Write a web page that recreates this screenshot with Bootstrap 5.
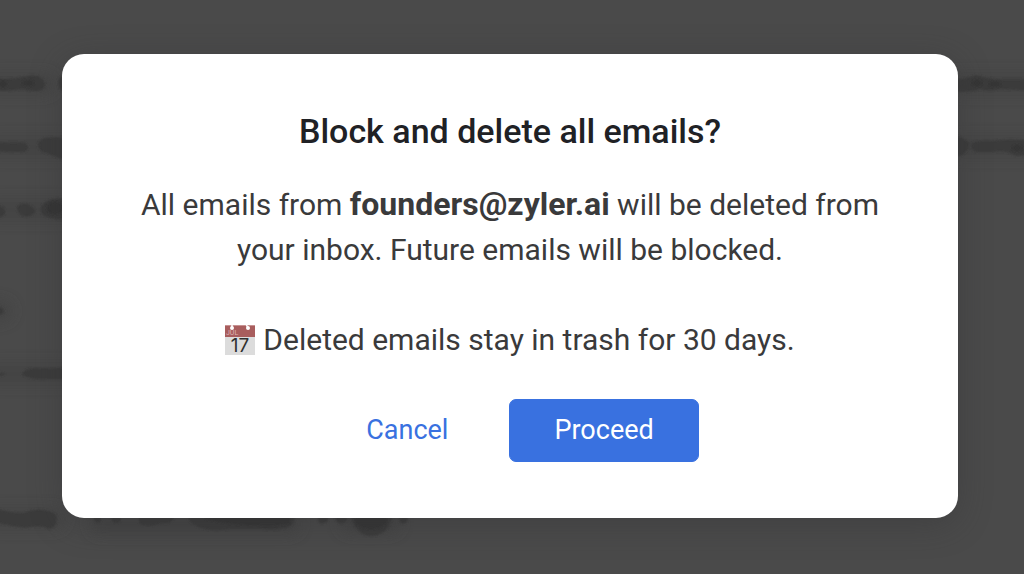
<!DOCTYPE html>
<html lang="en">
<head>
<meta charset="utf-8">
<meta name="viewport" content="width=device-width, initial-scale=1">
<title>Block and delete all emails?</title>
<link href="https://cdn.jsdelivr.net/npm/bootstrap@5.3.0/dist/css/bootstrap.min.css" rel="stylesheet">
<style>
  body { background: #4a4a4a; font-family: Roboto, "Liberation Sans", sans-serif; color: #3a3a3b; padding: 0 4px 2px 0; }
  .inbox-blur { inset: 0; z-index: 0; }
  .confirm { width: 88%; max-width: 896px; padding: 53px 56px 56px; border-radius: 22px; background: #fff; box-shadow: 0 6px 32px rgba(50, 50, 52, .4); z-index: 1; }
  .confirm-title { font-size: 34px; line-height: 48px; font-weight: 500; color: #202125; margin-bottom: 27px; }
  .confirm-text { font-size: 30px; line-height: 45px; }
  .confirm-text p + p { margin-top: 45px; }
  .confirm-text strong { font-size: 32px; line-height: 32px; }
  .confirm-actions { margin-top: 37px; gap: 16px; }
  .confirm-actions .btn { font-size: 27px; line-height: 39px; padding: 11px 44px; border-radius: 7px; min-width: 170px; }
  .btn-cancel { color: #3971e0; }
  .btn-proceed, .btn-proceed:hover { color: #fff; background: #3971e0; border-color: #3971e0; }
  .confirm-actions .btn-proceed { min-width: 189px; }
</style>
</head>
<body class="min-vh-100 d-flex align-items-center justify-content-center position-relative overflow-hidden">
  <svg class="inbox-blur position-absolute w-100 h-100" viewBox="0 0 1024 574" preserveAspectRatio="xMidYMid slice" aria-hidden="true">
    <defs>
      <filter id="soft" x="-20%" y="-20%" width="140%" height="140%"><feGaussianBlur stdDeviation="1"/></filter>
      <filter id="halo" x="-20%" y="-20%" width="140%" height="140%"><feGaussianBlur stdDeviation="7"/></filter>
    </defs>
    <g fill="none" stroke="#404040" stroke-width="20" stroke-linecap="round" opacity=".6" filter="url(#halo)">
      <path d="M-10 84H45M-10 147H80M-10 210H80M-10 311H2M-10 374H80M-10 519H55M100 524H290M350 523H390M955 84H1040M955 147H1040"/>
    </g>
    <g fill="#3b3b3b" filter="url(#soft)">
      <path d="M-5 78Q11 80 23 77Q38 73 43 80Q48 88 39 91Q29 91 22 89Q8 92-5 90Z"/>
      <path d="M-5 142Q10 143 24 142Q31 147 25 152Q10 153-5 151Z"/>
      <path d="M70 138Q49 136 42 139Q35 144 41 151Q51 155 70 162Z"/>
      <path d="M65 74Q57 78 58 84Q59 90 65 93Z"/>
      <path d="M-5 204Q6 206 5 213Q3 218-5 218Z"/>
      <path d="M17 207Q21 202 28 204Q36 208 35 213Q28 219 21 215Q17 212 17 207Z"/>
      <path d="M70 199Q47 196 41 207Q39 216 51 218Q61 221 70 218Z"/>
      <path d="M-5 305Q4 308 4 311Q2 316-5 316Z"/>
      <path d="M-5 373Q5 372 5 374Q4 376-5 376Z"/>
      <path d="M70 367Q54 369 35 368Q21 370 22 375Q32 380 48 379L70 379Z"/>
      <path d="M-5 508Q10 513 23 513Q36 508 44 510Q57 512 57 519Q57 526 50 529Q40 524 26 528Q10 526-5 522Z"/>
      <path d="M94 510H101V521Q97 525 94 520ZM111 510H121V520Q118 526 112 521ZM139 510H174V518Q171 525 162 523Q145 529 139 523Z"/>
      <path d="M186 510H295Q297 524 287 528Q272 531 262 529H230Q212 532 198 527Q187 523 186 510ZM316 510H328V521Q324 525 319 523ZM334 510H347V520Q342 527 336 521Z"/>
      <path d="M348 510H394Q391 528 382 533Q373 539 363 534Q353 529 348 510ZM398 510H408V519Q407 525 400 523Z"/>
      <path d="M950 80Q969 79 976 75Q985 78 995 79Q1012 80 1030 79V90Q1010 90 1000 89Q989 92 980 89Q970 93 950 91Z"/>
      <path d="M950 135Q963 136 970 144Q968 152 960 156H950ZM971 144Q976 140 992 141Q1010 138 1030 141V153Q1017 159 1010 153Q1004 150 992 152H977Q971 151 971 144Z"/>
    </g>
    <g fill="#353535" filter="url(#soft)">
      <ellipse cx="28" cy="83" rx="6" ry="3"/><ellipse cx="3" cy="84" rx="4" ry="3"/><ellipse cx="55" cy="208" rx="8" ry="6"/><ellipse cx="371" cy="520" rx="16" ry="9"/><ellipse cx="977" cy="83" rx="5" ry="3"/><ellipse cx="995" cy="84" rx="6" ry="3"/><ellipse cx="1017" cy="148" rx="5" ry="3"/>
      <path d="M205 510H290V523Q275 527 255 525Q235 526 205 519Z"/>
    </g>
  </svg>

  <main class="confirm position-relative text-center" role="alertdialog" aria-labelledby="confirm-title" aria-describedby="confirm-text">
    <h1 class="confirm-title" id="confirm-title">Block and delete all emails?</h1>
    <div class="confirm-text" id="confirm-text">
      <p class="mb-0">All emails from <strong>founders@zyler.ai</strong> will be deleted from your inbox. Future emails will be blocked.</p>
      <p class="mb-0 d-flex align-items-center justify-content-center gap-2">
        <svg width="30" height="32" viewBox="0 0 30 32" class="flex-shrink-0" role="img" aria-label="Calendar">
          <path fill="#dcdcdc" d="M0 12H30V31H0Z"/>
          <path fill="#a85d5d" d="M0 1H30V13H0Z"/>
          <path stroke="#c79292" d="M0 1.500H30" fill="none"/>
          <g fill="#fff"><circle cx="7" cy="4" r="2"/><circle cx="23" cy="4" r="2"/></g>
          <path stroke="#fff" stroke-width="1.500" fill="none" d="M7 4V0M23 4L21 0"/>
          <text x="1" y="11" font-size="7" fill="#dcb3b3" font-family="Roboto, sans-serif">JUL</text>
          <text x="15" y="28" text-anchor="middle" font-size="19" fill="#303030" font-family="Inter, sans-serif">17</text>
        </svg>
        <span>Deleted emails stay in trash for 30 days.</span>
      </p>
    </div>
    <div class="confirm-actions d-flex flex-wrap justify-content-center">
      <button type="button" class="btn btn-cancel">Cancel</button>
      <button type="button" class="btn btn-proceed">Proceed</button>
    </div>
  </main>
<script src="https://cdn.jsdelivr.net/npm/bootstrap@5.3.0/dist/js/bootstrap.bundle.min.js"></script>
</body>
</html>
